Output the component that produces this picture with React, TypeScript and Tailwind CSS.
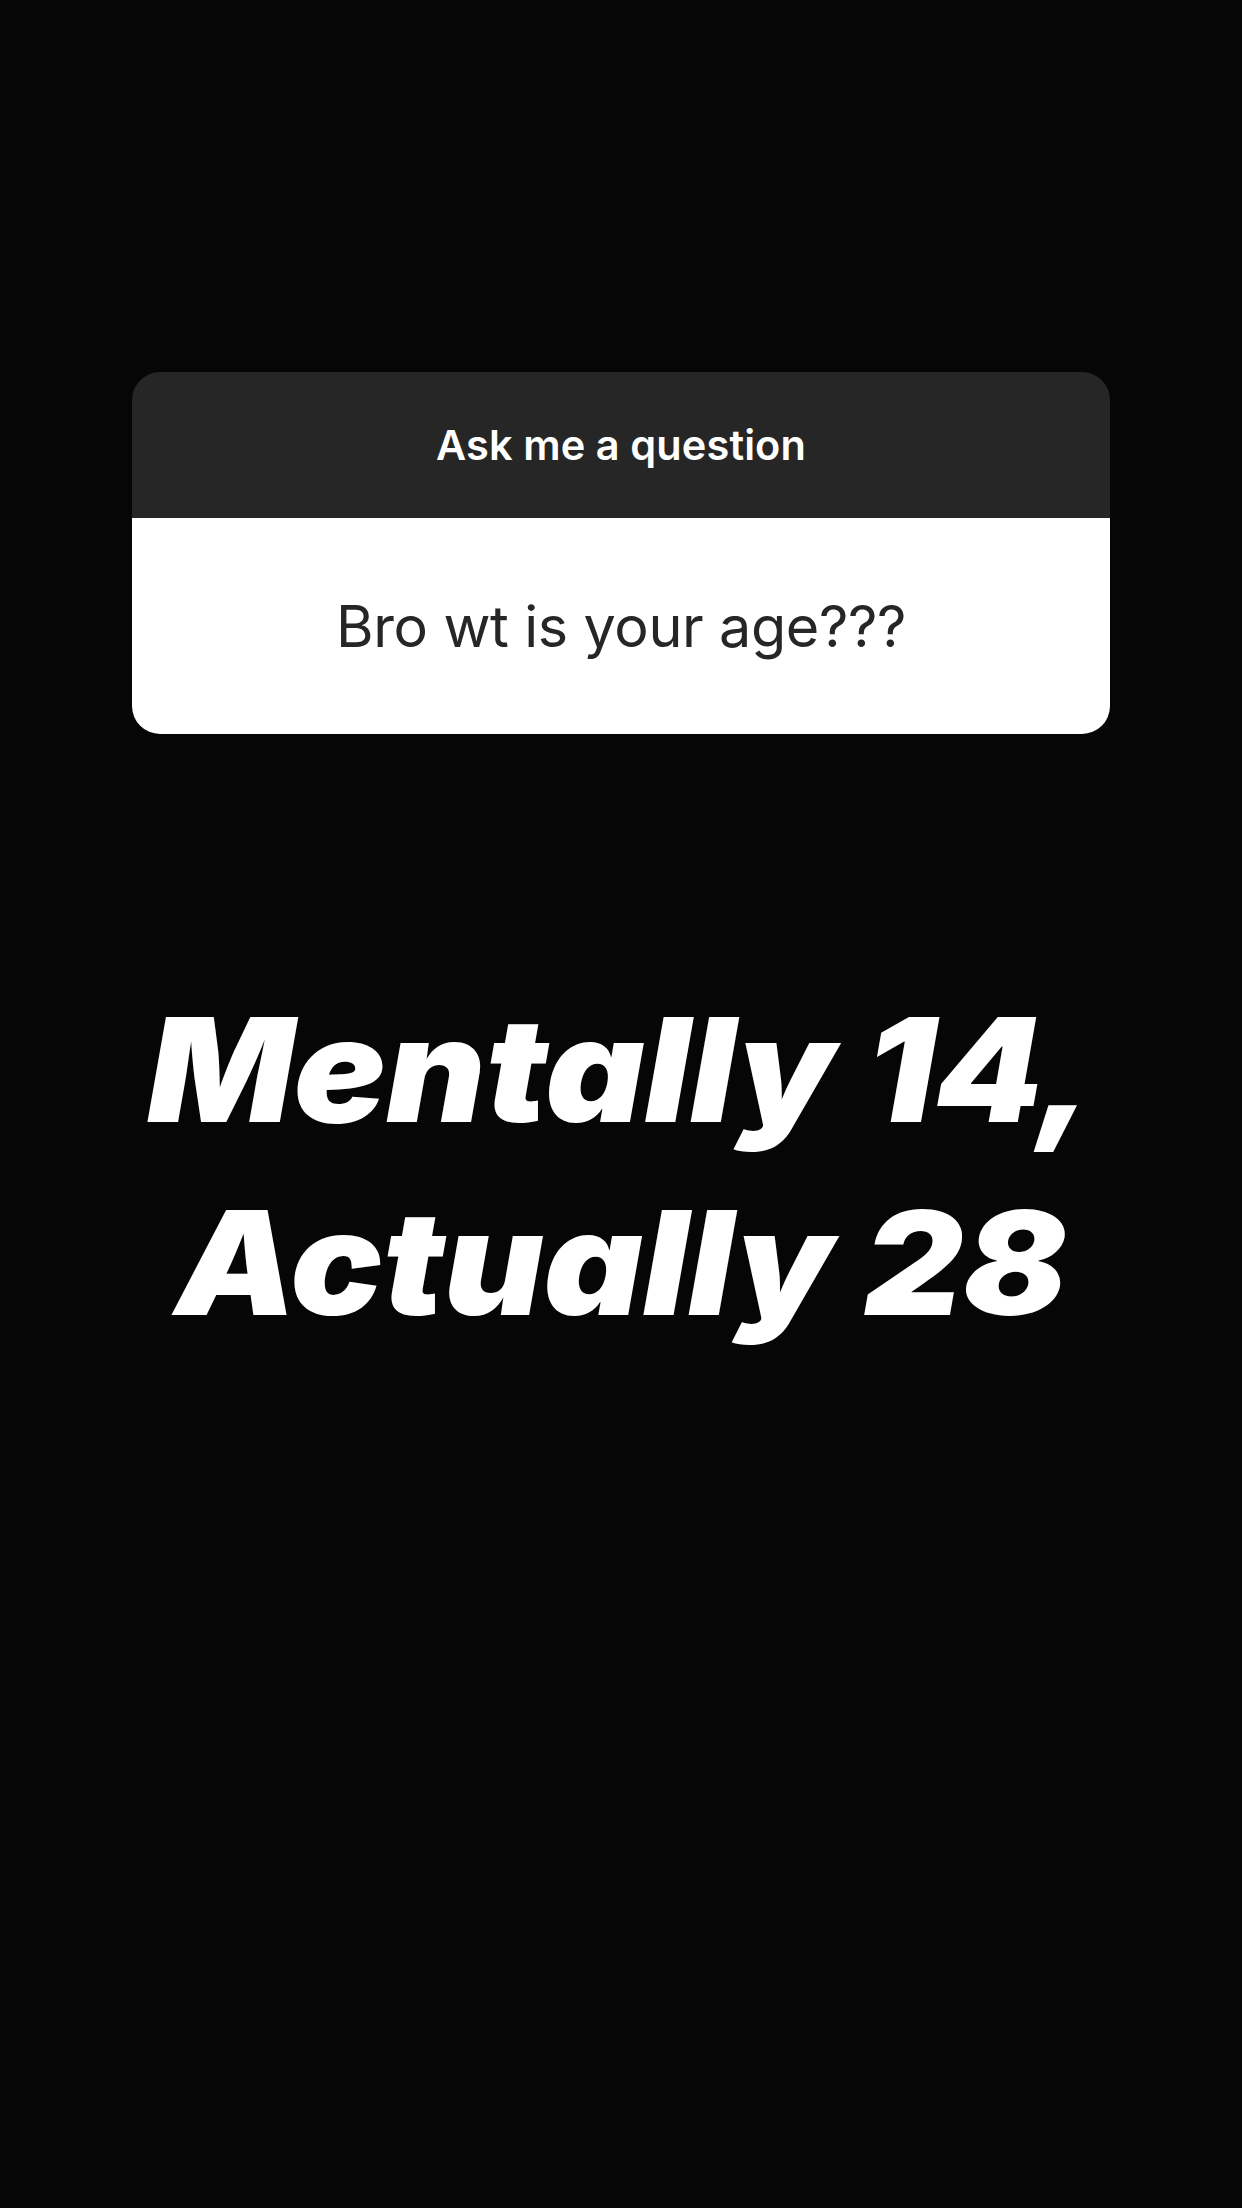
export default function App() {
  return (
    <div className="min-h-[2208px] w-[1242px] bg-[#060606] pt-[372px] font-['Inter','Liberation_Sans',sans-serif]">
      {/* Question sticker */}
      <div className="mx-auto w-[978px] overflow-hidden rounded-[28px]">
        <div className="flex h-[146px] items-center justify-center bg-[#262626]">
          <span className="text-[41.5px] font-semibold tracking-[0.1px] text-white">Ask me a question</span>
        </div>
        <div className="flex h-[216px] items-center justify-center bg-white">
          <span className="text-[57.5px] font-normal tracking-[-0.4px] text-[#262626]">Bro wt is your age???</span>
        </div>
      </div>

      {/* Answer text */}
      <div className="mt-[239px] scale-x-[1.065] text-center text-[144px] leading-[193px] font-black italic tracking-[0px] text-white">
        <p>Mentally 14,</p>
        <p>Actually 28</p>
      </div>
    </div>
  );
}
